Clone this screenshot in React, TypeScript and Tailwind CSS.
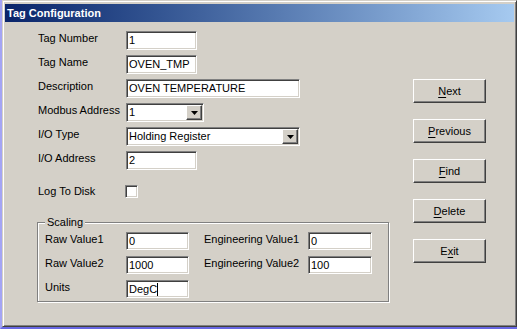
const sunken =
  'border border-t-[#808080] border-l-[#808080] border-b-white border-r-white shadow-[inset_1px_1px_0_#404040,inset_-1px_-1px_0_#d4d0c8] bg-white'
const raised =
  'border border-t-white border-l-white border-b-[#404040] border-r-[#404040] shadow-[inset_-1px_-1px_0_#808080,inset_1px_1px_0_#d4d0c8] bg-[#d4d0c8]'

function TextBox({ value, w, h = 19, caret = false }: { value: string; w: number; h?: number; caret?: boolean }) {
  return (
    <div
      className={`${sunken} flex items-center pl-[2px] text-[11px] leading-[13px] text-black whitespace-nowrap overflow-hidden`}
      style={{ width: w, height: h }}
    >
      {value}
      {caret && <span className="inline-block w-px h-[13px] bg-black" />}
    </div>
  )
}

function Combo({ value, w }: { value: string; w: number }) {
  return (
    <div
      className={`${sunken} flex items-center pl-[2px] pr-[1px] text-[11px] leading-[13px] text-black`}
      style={{ width: w, height: 19 }}
    >
      <span className="flex-1 whitespace-nowrap">{value}</span>
      <div className={`${raised} w-[16px] h-[15px] flex items-center justify-center`}>
        <svg width="7" height="4" viewBox="0 0 7 4">
          <path d="M0 0h7L3.5 4z" fill="#000" />
        </svg>
      </div>
    </div>
  )
}

function Row({ label, children, lw = 88 }: { label: string; children: React.ReactNode; lw?: number }) {
  return (
    <div className="flex items-start h-[24px]">
      <div className="-mt-px leading-[13px] pt-[2px] shrink-0" style={{ width: lw }}>
        {label}
      </div>
      {children}
    </div>
  )
}

function Btn({ label, u }: { label: string; u: number }) {
  return (
    <div className={`${raised} w-[73px] h-[24px] flex items-center justify-center text-[11px] text-black`}>
      <span>
        {label.slice(0, u)}
        <span className="underline underline-offset-[2px]">{label[u]}</span>
        {label.slice(u + 1)}
      </span>
    </div>
  )
}

export default function App() {
  return (
    <div
      className="w-[517px] h-[329px] bg-[#d4d0c8] border-l-2 border-b-2 border-l-[#a4a4f4] border-b-[#6868e4] text-[11px] text-black"
      style={{ fontFamily: '"Liberation Sans", Arial, sans-serif' }}
    >
      <div className="w-full h-full border border-t-[#d4d0c8] border-l-[#d4d0c8] border-r-[#404040] border-b-[#404040] shadow-[inset_1px_1px_0_#fff,inset_-1px_-1px_0_#808080] px-[2px] pt-[3px] flex flex-col">
        <div className="h-[18px] bg-gradient-to-r from-[#0a246a] to-[#a6caf0] flex items-center pl-[2px]">
          <span className="text-white font-bold text-[11px] leading-[13px]">Tag Configuration</span>
        </div>

        <div className="flex flex-1">
          <div className="w-[408px] pl-[32px] pt-[9px] flex flex-col">
            <div className="pl-px">
              <Row label="Tag Number">
                <TextBox value="1" w={71} />
              </Row>
              <Row label="Tag Name">
                <TextBox value="OVEN_TMP" w={71} />
              </Row>
              <Row label="Description">
                <TextBox value="OVEN TEMPERATURE" w={174} />
              </Row>
              <Row label="Modbus Address">
                <Combo value="1" w={78} />
              </Row>
              <Row label="I/O Type">
                <Combo value="Holding Register" w={174} />
              </Row>
              <Row label="I/O Address">
                <TextBox value="2" w={71} />
              </Row>
              <div className="flex items-center mt-[10px] h-[13px]">
                <div className="w-[87px] leading-[13px]">Log To Disk</div>
                <div className={`${sunken} w-[13px] h-[13px]`} />
              </div>
            </div>

            <div className="relative mt-[24px] w-[352px] border border-[#808080] shadow-[inset_1px_1px_0_#fff,1px_1px_0_#fff] pl-[7px] pt-[9px] pb-[3px] flex flex-col gap-[6px]">
              <span className="absolute -top-[7px] left-[7px] px-[2px] bg-[#d4d0c8] leading-[13px]">Scaling</span>
              <div className="flex items-start h-[18px]">
                <div className="w-[81px] -mt-px pt-[2px] leading-[13px]">Raw Value1</div>
                <TextBox value="0" w={63} h={18} />
                <div className="w-[104px] ml-[15px] -mt-px pt-[2px] leading-[13px]">Engineering Value1</div>
                <TextBox value="0" w={64} h={18} />
              </div>
              <div className="flex items-start h-[18px]">
                <div className="w-[81px] -mt-px pt-[2px] leading-[13px]">Raw Value2</div>
                <TextBox value="1000" w={63} h={18} />
                <div className="w-[104px] ml-[15px] -mt-px pt-[2px] leading-[13px]">Engineering Value2</div>
                <TextBox value="100" w={64} h={18} />
              </div>
              <div className="flex items-start h-[18px]">
                <div className="w-[81px] -mt-px pt-[2px] leading-[13px]">Units</div>
                <TextBox value="DegC" w={63} h={18} caret />
              </div>
            </div>
          </div>

          <div className="pt-[57px] flex flex-col gap-[16px]">
            <Btn label="Next" u={0} />
            <Btn label="Previous" u={0} />
            <Btn label="Find" u={0} />
            <Btn label="Delete" u={0} />
            <Btn label="Exit" u={1} />
          </div>
        </div>
      </div>
    </div>
  )
}
